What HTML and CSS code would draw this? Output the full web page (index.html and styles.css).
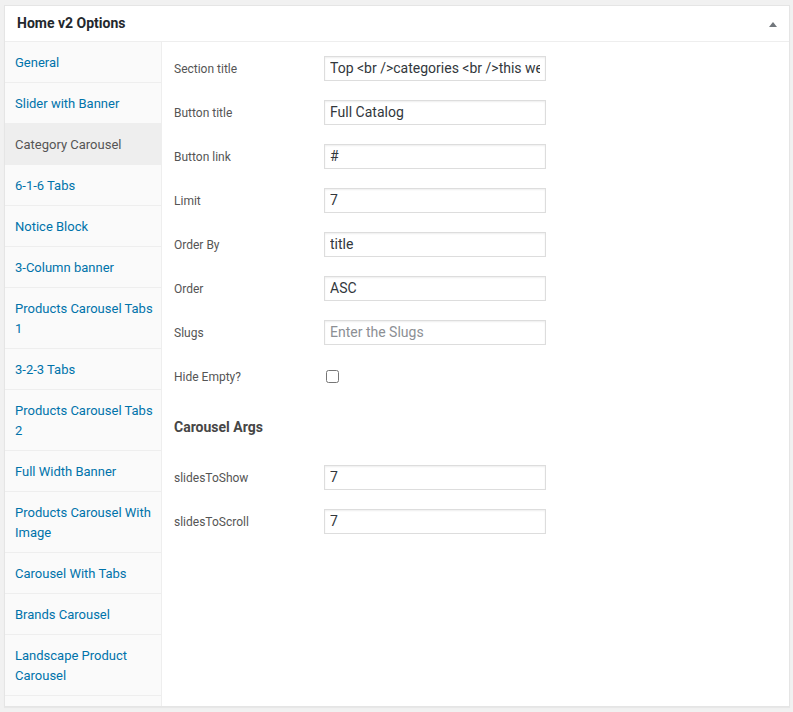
FILE: index.html
```html
<!DOCTYPE html>
<html lang="en">
<head>
<meta charset="utf-8">
<title>Home v2 Options</title>
<link rel="stylesheet" href="styles.css">
</head>
<body>
<div class="postbox">
  <div class="postbox-header">
    <h2 class="hndle">Home v2 Options</h2>
    <span class="toggle-arrow" aria-hidden="true"></span>
  </div>
  <div class="inside">
    <ul class="tabs">
      <li><a href="#">General</a></li>
      <li><a href="#">Slider with Banner</a></li>
      <li class="active"><a href="#">Category Carousel</a></li>
      <li><a href="#">6-1-6 Tabs</a></li>
      <li><a href="#">Notice Block</a></li>
      <li><a href="#">3-Column banner</a></li>
      <li><a href="#">Products Carousel Tabs 1</a></li>
      <li><a href="#">3-2-3 Tabs</a></li>
      <li><a href="#">Products Carousel Tabs 2</a></li>
      <li><a href="#">Full Width Banner</a></li>
      <li><a href="#">Products Carousel With Image</a></li>
      <li><a href="#">Carousel With Tabs</a></li>
      <li><a href="#">Brands Carousel</a></li>
      <li><a href="#">Landscape Product Carousel</a></li>
    </ul>
    <div class="panel">
      <div class="field"><label>Section title</label><input type="text" value="Top &lt;br /&gt;categories &lt;br /&gt;this week"></div>
      <div class="field"><label>Button title</label><input type="text" value="Full Catalog"></div>
      <div class="field"><label>Button link</label><input type="text" value="#"></div>
      <div class="field"><label>Limit</label><input type="text" value="7"></div>
      <div class="field"><label>Order By</label><input type="text" value="title"></div>
      <div class="field"><label>Order</label><input type="text" value="ASC"></div>
      <div class="field"><label>Slugs</label><input type="text" placeholder="Enter the Slugs"></div>
      <div class="field"><label>Hide Empty?</label><input type="checkbox" class="check"></div>
      <h3 class="group-title">Carousel Args</h3>
      <div class="field"><label>slidesToShow</label><input type="text" value="7"></div>
      <div class="field"><label>slidesToScroll</label><input type="text" value="7"></div>
    </div>
  </div>
</div>
</body>
</html>
```

FILE: styles.css
```css
html, body {
  margin: 0;
  padding: 0;
  background: #f1f1f1;
}

body {
  font-family: Roboto, "Liberation Sans", Arial, sans-serif;
  color: #555;
  padding: 5px 3px 5px 4px;
}

.postbox {
  background: #fff;
  border: 1px solid #e5e5e5;
  box-shadow: 0 1px 1px rgba(0, 0, 0, 0.04);
  display: flex;
  flex-direction: column;
  height: 702px;
  box-sizing: border-box;
}

.postbox-header {
  display: flex;
  align-items: center;
  justify-content: space-between;
  border-bottom: 1px solid #eee;
  height: 36px;
  box-sizing: border-box;
}

.hndle {
  margin: 0;
  padding: 0 12px 2px;
  font-size: 14px;
  line-height: 20px;
  font-weight: 700;
  color: #23282d;
}

.toggle-arrow {
  width: 0;
  height: 0;
  border-left: 4px solid transparent;
  border-right: 4px solid transparent;
  border-bottom: 5px solid #72777c;
  margin-right: 12px;
  margin-top: 2px;
}

.inside {
  flex: 1;
  display: flex;
  min-height: 0;
}

.tabs {
  list-style: none;
  margin: 0;
  padding: 0;
  width: 156px;
  background: #fafafa;
  border-right: 1px solid #eee;
  flex: none;
}

.tabs li {
  margin: 0;
  border-bottom: 1px solid #eee;
}

.tabs a {
  display: block;
  padding: 11px 4px 9px 10px;
  font-size: 13px;
  line-height: 20px;
  color: #0073aa;
  text-decoration: none;
}

.tabs li.active {
  background: #eee;
}

.tabs li.active a {
  color: #555;
}

.panel {
  flex: 1;
  padding: 4px 12px 0 12px;
}

.field {
  display: grid;
  grid-template-columns: 150px 222px;
  align-items: center;
  height: 44px;
}

.field label {
  font-size: 12px;
  line-height: 16px;
  padding-top: 2px;
  color: #555;
}

.field input[type="text"] {
  box-sizing: border-box;
  width: 222px;
  height: 25px;
  margin: 0;
  padding: 0 5px;
  border: 1px solid #ddd;
  border-radius: 0;
  box-shadow: inset 0 1px 2px rgba(0, 0, 0, 0.07);
  background: #fff;
  font-family: Roboto, "Liberation Sans", Arial, sans-serif;
  font-size: 14px;
  color: #32373c;
  outline: none;
}

.field input::placeholder {
  color: #8c8f94;
}

.field .check {
  width: 13px;
  height: 13px;
  margin: 0 0 0 2px;
}

.group-title {
  margin: 0;
  padding: 19px 0 18px;
  font-size: 14px;
  line-height: 20px;
  font-weight: 700;
  color: #464646;
}
```
